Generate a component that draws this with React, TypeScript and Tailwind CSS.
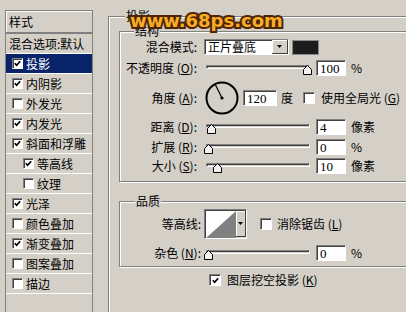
import React from "react";

const layers = [
  { name: "投影", on: true, active: true },
  { name: "内阴影", on: true },
  { name: "外发光", on: false },
  { name: "内发光", on: true },
  { name: "斜面和浮雕", on: true },
  { name: "等高线", on: true, sub: true },
  { name: "纹理", on: false, sub: true },
  { name: "光泽", on: true },
  { name: "颜色叠加", on: false },
  { name: "渐变叠加", on: true },
  { name: "图案叠加", on: false },
  { name: "描边", on: false },
];

const Check = () => (
  <svg width="7" height="7" viewBox="0 0 7 7">
    <path d="M0.8 3.2 L2.6 5.2 L6.2 1.2" fill="none" stroke="#000" strokeWidth="1.7" />
  </svg>
);

const Box = ({ on, big }: { on: boolean; big?: boolean }) => (
  <span
    className={`${big ? "w-[12px] h-[12px]" : "w-[11px] h-[11px]"} shrink-0 bg-white border border-t-[#808080] border-l-[#808080] border-b-white border-r-white shadow-[inset_1px_1px_0_#404040] flex items-center justify-center`}
  >
    {on && <Check />}
  </span>
);

const Field = ({ value, w }: { value: string; w: string }) => (
  <div
    className={`${w} h-[16px] shrink-0 bg-white border border-t-[#808080] border-l-[#808080] border-b-white border-r-white shadow-[inset_1px_1px_0_#404040] pl-[3px] flex items-center font-['Liberation_Serif',serif] text-[13px] leading-none`}
  >
    {value}
  </div>
);

const Slider = ({ thumb }: { thumb: string }) => (
  <div className="relative w-[106px] h-[16px] shrink-0">
    <div className="mt-[5px] ml-[2px] w-[104px] h-[4px] border border-t-[#808080] border-l-[#808080] border-b-white border-r-white shadow-[inset_1px_1px_0_#404040]" />
    <svg className={`absolute top-[5px] ${thumb}`} width="9" height="10" viewBox="0 0 9 10">
      <path d="M0.5 9.5V4.5L4.5 0.5L8.5 4.5V9.5Z" fill="#f2f2f2" stroke="#000" />
    </svg>
  </div>
);

const Arrow = () => (
  <svg width="5" height="3" viewBox="0 0 5 3">
    <path d="M0 0H5L2.5 3Z" fill="#000" />
  </svg>
);

const Key = ({ k }: { k: string }) => (
  <span>
    {" ("}
    <span className="underline">{k}</span>
    {")"}
  </span>
);

const SliderRow = ({
  label,
  k,
  thumb,
  value,
  unit,
  cls,
  lw,
}: {
  label: string;
  k: string;
  thumb: string;
  value: string;
  unit: string;
  cls: string;
  lw: string;
}) => (
  <div className={`flex items-center h-[16px] ${cls}`}>
    <div className={`${lw} shrink-0 text-right whitespace-nowrap`}>
      {label}
      <Key k={k} />:
    </div>
    <Slider thumb={thumb} />
    <div className="ml-[6px]">
      <Field value={value} w="w-[30px]" />
    </div>
    <span className="ml-[5px] whitespace-nowrap">{unit}</span>
  </div>
);

export default function App() {
  return (
    <div className="relative w-[406px] h-[312px] overflow-hidden bg-[#d4d0c8] flex text-[12px] leading-[16px] text-black font-['Noto_Sans_CJK_SC',sans-serif]">
      {/* style list */}
      <div className="mt-[10px] ml-[5px] w-[88px] h-[320px] shrink-0 border border-[#808080]">
        <div className="h-[23px] pl-[3px] flex items-center border-b-2 border-[#808080] shadow-[inset_1px_1px_0_#fff]">
          样式
        </div>
        <div className="h-[20px] pl-[3px] flex items-center border-b border-white whitespace-nowrap">
          混合选项:默认
        </div>
        {layers.map((l) => (
          <div
            key={l.name}
            className={`h-[20px] flex items-center gap-[3px] border-b border-white whitespace-nowrap ${
              l.sub ? "pl-[17px]" : "pl-[6px]"
            } ${l.active ? "bg-[#0a246a] text-white" : ""}`}
          >
            <Box on={l.on} />
            <span>{l.name}</span>
          </div>
        ))}
      </div>

      {/* 投影 group */}
      <div className="relative ml-[15px] mt-[16px] w-[330px] h-[320px] shrink-0 border border-[#808080] shadow-[inset_1px_1px_0_#fff,1px_1px_0_#fff]">
        <span className="absolute left-[16px] -top-[9px] px-[1px] bg-[#d4d0c8]">投影</span>

        {/* 结构 */}
        <div className="relative ml-[10px] mt-[14px] w-[320px] h-[151px] border border-[#808080] shadow-[inset_1px_1px_0_#fff,1px_1px_0_#fff]">
          <span className="absolute left-[14px] -top-[9px] px-[1px] bg-[#d4d0c8]">结构</span>

          <div className="flex items-center h-[16px] mt-[7px]">
            <div className="w-[77px] shrink-0 text-right">混合模式:</div>
            <div className="ml-[7px] w-[85px] h-[16px] flex items-center bg-white border border-t-[#808080] border-l-[#808080] border-b-white border-r-white shadow-[inset_1px_1px_0_#404040]">
              <span className="flex-1 pl-[3px]">正片叠底</span>
              <span className="w-[16px] h-[14px] flex items-center justify-center bg-[#d4d0c8] border-r border-b border-[#404040] shadow-[inset_1px_1px_0_#fff]">
                <Arrow />
              </span>
            </div>
            <div className="ml-[3px] w-[27px] h-[15px] bg-[#1c1c1c] border border-[#8a8a8a]" />
          </div>

          <SliderRow label="不透明度" k="O" thumb="left-[99px]" value="100" unit="%" cls="mt-[5px]" lw="w-[77px] mr-[7px]" />

          <div className="flex items-center h-[34px] mt-[5px]">
            <div className="w-[77px] shrink-0 text-right whitespace-nowrap">
              角度
              <Key k="A" />:
            </div>
            <svg className="ml-[8px] shrink-0" width="34" height="34" viewBox="0 0 34 34">
              <circle cx="17" cy="17" r="15.5" fill="none" stroke="#000" strokeWidth="2" />
              <line x1="17" y1="17" x2="10.5" y2="4" stroke="#000" strokeWidth="1.2" />
              <circle cx="17" cy="17" r="1.6" fill="#000" />
            </svg>
            <div className="ml-[4px]">
              <Field value="120" w="w-[34px]" />
            </div>
            <span className="ml-[4px]">度</span>
            <span className="ml-[10px]">
              <Box on={false} big />
            </span>
            <span className="ml-[6px] whitespace-nowrap">
              使用全局光
              <Key k="G" />
            </span>
          </div>

          <SliderRow label="距离" k="D" thumb="left-[3px]" value="4" unit="像素" cls="mt-[4px]" lw="w-[77px] mr-[7px]" />
          <SliderRow label="扩展" k="R" thumb="left-[0px]" value="0" unit="%" cls="mt-[4px]" lw="w-[77px] mr-[7px]" />
          <SliderRow label="大小" k="S" thumb="left-[9px]" value="10" unit="像素" cls="mt-[3px]" lw="w-[77px] mr-[7px]" />
        </div>

        {/* 品质 */}
        <div className="relative ml-[10px] mt-[19px] w-[320px] h-[66px] border border-[#808080] shadow-[inset_1px_1px_0_#fff,1px_1px_0_#fff]">
          <span className="absolute left-[15px] -top-[9px] px-[1px] bg-[#d4d0c8]">品质</span>

          <div className="flex items-center h-[30px] mt-[7px]">
            <div className="w-[81px] shrink-0 text-right">等高线:</div>
            <div className="ml-[3px] w-[43px] h-[30px] flex border border-t-[#808080] border-l-[#808080] border-b-white border-r-white shadow-[inset_1px_1px_0_#404040]">
              <svg className="ml-[1px] mt-[1px]" width="30" height="27" viewBox="0 0 30 27">
                <rect width="30" height="27" fill="#fff" />
                <path d="M0 27L30 0V27Z" fill="#808080" />
              </svg>
              <span className="flex-1 mt-[1px] mb-[1px] flex items-center justify-center bg-[#d4d0c8] border-r border-b border-[#404040] shadow-[inset_1px_1px_0_#fff]">
                <Arrow />
              </span>
            </div>
            <span className="ml-[13px]">
              <Box on={false} big />
            </span>
            <span className="ml-[5px] whitespace-nowrap">
              消除锯齿
              <Key k="L" />
            </span>
          </div>

          <SliderRow label="杂色" k="N" thumb="left-[0px]" value="0" unit="%" cls="mt-[6px]" lw="w-[81px] mr-[3px]" />
        </div>

        <div className="flex items-center gap-[6px] ml-[100px] mt-[7px] h-[12px]">
          <Box on big />
          <span className="whitespace-nowrap">
            图层挖空投影
            <Key k="K" />
          </span>
        </div>
      </div>

      {/* watermark */}
      <span className="absolute left-[130px] top-[12px] font-['DejaVu_Sans',sans-serif] font-bold text-[18px] leading-none text-[#f9ad26] [-webkit-text-stroke:4px_#4e2504] [paint-order:stroke_fill] whitespace-nowrap">
        www.68ps.com
      </span>
    </div>
  );
}
